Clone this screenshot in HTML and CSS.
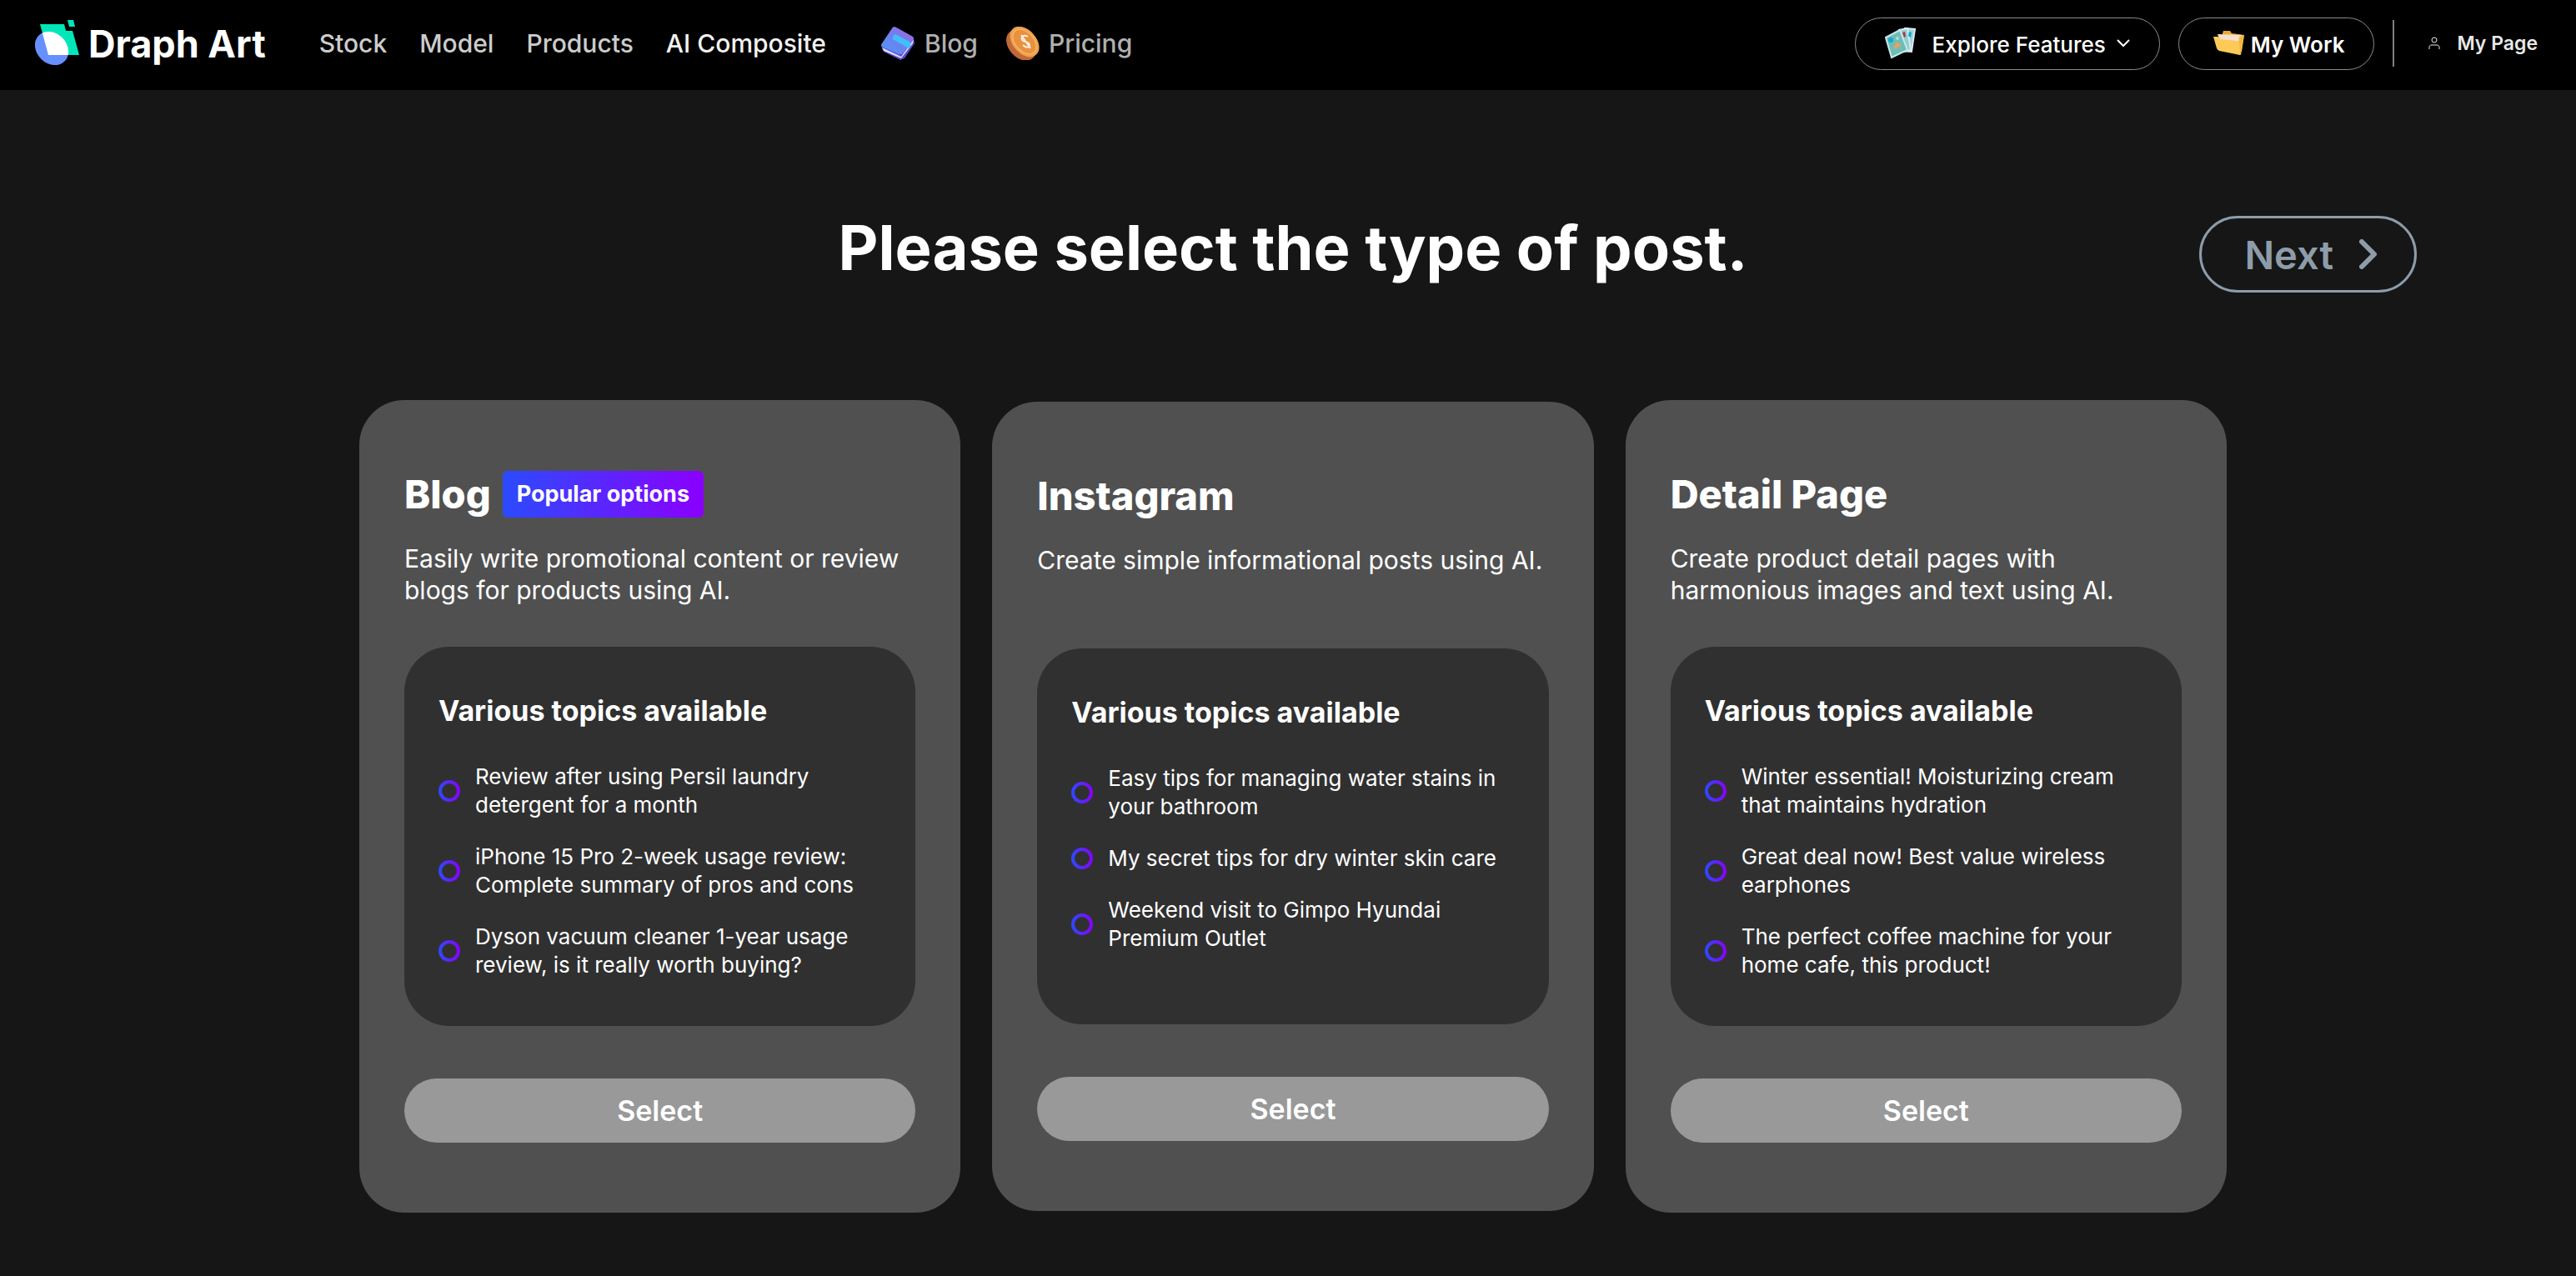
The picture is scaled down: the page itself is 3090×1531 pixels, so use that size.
FILE: index.html
```html
<!-- post type page -->

<!DOCTYPE html>
<html lang="en">

<head>

    <!-- meta datas -->

    <meta charset="UTF-8">
    <meta name="viewport" content="width=device-width, initial-scale=1.0">
    <title>Draph Art</title>

    <!-- css part -->

    <link rel="stylesheet" href="styles.css">
</head>

<body>

    <!-- top bar -->

    <header>
        <a class="logo" href="#">
            <svg width="54" height="56" viewBox="0 0 54 56">
                <clipPath id="sheet">
                    <path d="M6 5H35L37 13H45L53 42H16Z" />
                </clipPath>
                <path d="M6 5H35L37 13H45L53 42H16Z" fill="#00e8b8" />
                <path d="M39 0H46L48 8H41Z" fill="#00e8b8" />
                <ellipse cx="20" cy="34" rx="22" ry="18" fill="#6690ff" transform="rotate(45 20 34)" />
                <g clip-path="url(#sheet)">
                    <ellipse cx="20" cy="34" rx="22" ry="18" fill="#fff" transform="rotate(45 20 34)" />
                </g>
            </svg>
            <span>Draph Art</span>
        </a>

        <nav>
            <a href="#">Stock</a>
            <a href="#">Model</a>
            <a href="#">Products</a>
            <a class="active" href="#">AI Composite</a>
        </nav>

        <div class="links">
            <a href="#">
                <svg width="42" height="40" viewBox="0 0 42 40">
                    <linearGradient id="book" x1="0" y1="1" x2="1" y2="0">
                        <stop offset="0" stop-color="#4a9cf5" />
                        <stop offset="0.5" stop-color="#6f7ff0" />
                        <stop offset="1" stop-color="#a765dc" />
                    </linearGradient>
                    <path d="M1 23L4 30L24 40L29 38L41 20L40 14L26 32Z" fill="#5a49c8" />
                    <path d="M2 25L25 36L40 15L39 20L25 38L4 29Z" fill="#dcdcff" />
                    <path d="M17 0Q18 0 39 12Q41 14 39 16L27 32Q25 34 22 33L2 24Q0 22 2 20L14 2Q15 0 17 0Z" fill="url(#book)" />
                    <path d="M18 9L35 18Q37 20 36 24L34 26L15 15Q14 11 18 9Z" fill="#3fc0fb" />
                </svg>
                <span>Blog</span>
            </a>
            <a href="#">
                <svg width="40" height="40" viewBox="0 0 40 40">
                    <ellipse cx="18" cy="22" rx="15" ry="21" fill="#c06a38" transform="rotate(-42 18 22)" />
                    <ellipse cx="22" cy="18" rx="14" ry="21" fill="#f0a24e" transform="rotate(-42 22 18)" />
                    <ellipse cx="22" cy="18" rx="11" ry="17" fill="#e8913e" stroke="#f9bd74" transform="rotate(-42 22 18)" />
                    <path d="M26 12C21 9 16 13 20 17C23 19 28 18 28 22C28 25 24 26 20 22M18 10L29 26" fill="none" stroke="#fdeedd" stroke-width="2" />
                </svg>
                <span>Pricing</span>
            </a>
        </div>

        <div class="actions">
            <button class="pill explore">
                <svg width="38" height="38" viewBox="0 0 38 38">
                    <path d="M24 1L36 2L32 29L20 28Z" fill="#9ad3d6" stroke="#dbe9f2" stroke-width="2" />
                    <path d="M17 3L27 1L31 27L23 29Z" fill="#8fcfcd" stroke="#dbe9f2" stroke-width="2" />
                    <path d="M21 6L24 5L25 11L23 12Z" fill="#b5304f" />
                    <path d="M29 5L32 6L31 12L28 10Z" fill="#11a9ca" />
                    <path d="M1 12L18 3L27 27L8 36Z" fill="#6dbdb6" stroke="#c9e6e8" stroke-width="2" />
                    <circle cx="7" cy="15" r="3" fill="#11a9ca" />
                    <circle cx="15" cy="13" r="2" fill="#b4d8dc" />
                    <path d="M10 26L14 17L20 22Z" fill="#eda15c" />
                </svg>
                <span>Explore Features</span>
                <svg class="arrow" width="16" height="10" viewBox="0 0 16 10">
                    <path d="M1 1L8 8L15 1" fill="none" stroke="#fff" stroke-width="2" />
                </svg>
            </button>
            <button class="pill work">
                <svg width="38" height="30" viewBox="0 0 38 30">
                    <path d="M11 3L12 0H20L22 3L37 5L34 25L10 22Z" fill="#e9a92e" />
                    <path d="M5 4L34 5L33 27L12 22Z" fill="#f5dfd0" />
                    <path d="M31 7L37 5L33 29L29 28Z" fill="#f2b743" />
                    <path d="M0 7H6L8 10L29 12Q31 12 31 14L32 29L7 24Q5 23 4 21Z" fill="#fdca58" />
                </svg>
                <span>My Work</span>
            </button>
            <span class="line"></span>
            <a class="mypage" href="#">
                <svg width="14" height="16" viewBox="0 0 14 16">
                    <circle cx="7" cy="4" r="3" fill="none" stroke="#e8e8e8" />
                    <path d="M1 15V13C1 11 2 10 4 10H10C12 10 13 11 13 13V15" fill="none" stroke="#e8e8e8" />
                </svg>
                <span>My Page</span>
            </a>
        </div>
    </header>

    <!-- post types -->

    <main>
        <div class="top">
            <h1>Please select the type of post.</h1>
            <button class="next">
                Next
                <svg width="22" height="36" viewBox="0 0 22 36">
                    <path d="M3 3L18 18L3 33" fill="none" stroke="#8e9caa" stroke-width="6" stroke-linecap="round" stroke-linejoin="round" />
                </svg>
            </button>
        </div>

        <div class="cards">
            <section class="card">
                <div class="name">
                    <h2>Blog</h2>
                    <span class="badge">Popular options</span>
                </div>
                <p>Easily write promotional content or review blogs for products using AI.</p>
                <div class="topics">
                    <h3>Various topics available</h3>
                    <ul>
                        <li>Review after using Persil laundry detergent for a month</li>
                        <li>iPhone 15 Pro 2-week usage review: Complete summary of pros and cons</li>
                        <li>Dyson vacuum cleaner 1-year usage review, is it really worth buying?</li>
                    </ul>
                </div>
                <button class="select">Select</button>
            </section>

            <section class="card">
                <div class="name">
                    <h2>Instagram</h2>
                </div>
                <p>Create simple informational posts using AI.</p>
                <div class="topics">
                    <h3>Various topics available</h3>
                    <ul>
                        <li>Easy tips for managing water stains in your bathroom</li>
                        <li>My secret tips for dry winter skin care</li>
                        <li>Weekend visit to Gimpo Hyundai Premium Outlet</li>
                    </ul>
                </div>
                <button class="select">Select</button>
            </section>

            <section class="card">
                <div class="name">
                    <h2>Detail Page</h2>
                </div>
                <p>Create product detail pages with harmonious images and text using AI.</p>
                <div class="topics">
                    <h3>Various topics available</h3>
                    <ul>
                        <li>Winter essential! Moisturizing cream that maintains hydration</li>
                        <li>Great deal now! Best value wireless earphones</li>
                        <li>The perfect coffee machine for your home cafe, this product!</li>
                    </ul>
                </div>
                <button class="select">Select</button>
            </section>
        </div>
    </main>
</body>

</html>
```
FILE: styles.css
```css
*,
*::before {
    margin: 0;
    padding: 0;
    box-sizing: border-box;
}

body {
    min-height: 100vh;
    background-color: #161616;
    color: white;
    font-family: Inter, "Liberation Sans", sans-serif;
}

a {
    color: inherit;
    text-decoration: none;
}

button {
    font-family: inherit;
    color: inherit;
    cursor: pointer;
}

svg {
    flex-shrink: 0;
}

/* top bar */

header {
    display: flex;
    align-items: center;
    height: 108px;
    padding: 0 46px 4px 42px;
    background-color: black;
    white-space: nowrap;
}

header .logo {
    display: flex;
    align-items: center;
    gap: 10px;
    font-size: 45px;
    font-weight: 700;
}

header nav {
    display: flex;
    gap: 39px;
    margin-left: 64px;
    font-size: 30px;
    font-weight: 500;
    color: #cccccc;
}

header nav .active {
    color: #f2f2f2;
}

header .links {
    display: flex;
    gap: 34px;
    margin-left: 65px;
    font-size: 30px;
    font-weight: 500;
    color: #b0b0b0;
}

header .links a {
    display: flex;
    align-items: center;
    gap: 11px;
}

header .actions {
    display: flex;
    align-items: center;
    margin-left: auto;
}

header .pill {
    display: flex;
    align-items: center;
    justify-content: center;
    height: 63px;
    border: 1px solid #8c8c8c;
    border-radius: 32px;
    background-color: black;
    font-size: 26px;
    font-weight: 500;
}

header .pill span {
    padding-top: 3px;
}

header .explore {
    padding: 0 35px;
    gap: 19px;
}

header .explore .arrow {
    margin-left: -6px;
}

header .work {
    margin-left: 22px;
    padding: 0 35px 0 41px;
    gap: 7px;
    font-weight: 600;
}

header .line {
    width: 2px;
    height: 56px;
    margin-left: 22px;
    background-color: #808080;
}

header .mypage {
    display: flex;
    align-items: center;
    gap: 20px;
    margin-left: 41px;
    font-size: 23px;
    font-weight: 600;
    color: #e8e8e8;
}

/* title and next */

main {
    padding: 151px 191px 76px 203px;
}

main .top {
    display: grid;
    grid-template-columns: 1fr auto 1fr;
    align-items: start;
}

main .top h1 {
    grid-column: 2;
    font-size: 74px;
    line-height: 76px;
    font-weight: 700;
}

main .top .next {
    display: flex;
    align-items: center;
    justify-self: end;
    gap: 31px;
    height: 92px;
    padding: 0 44px 0 51px;
    border: 3px solid #8e9caa;
    border-radius: 46px;
    background-color: transparent;
    font-size: 47px;
    font-weight: 600;
    color: #8e9caa;
}

/* cards */

main .cards {
    display: grid;
    grid-template-columns: repeat(3, 1fr);
    align-items: center;
    gap: 38px;
    max-width: 2240px;
    margin: 129px auto 0;
}

.card {
    padding: 84px 54px;
    border-radius: 54px;
    background-color: #505050;
}

.card .name {
    display: flex;
    align-items: center;
    gap: 14px;
}

.card h2 {
    font-size: 47px;
    line-height: 58px;
    font-weight: 800;
}

.card .badge {
    padding: 0 17px;
    border-radius: 6px;
    background: linear-gradient(to right, #2b4bff, #8b00ff);
    font-size: 27px;
    line-height: 56px;
    font-weight: 700;
}

.card p {
    min-height: 76px;
    margin-top: 29px;
    font-size: 30px;
    line-height: 38px;
}

.card .topics {
    min-height: 451px;
    margin-top: 49px;
    padding: 56px 41px;
    border-radius: 54px;
    background-color: #303030;
}

.card h3 {
    font-size: 34px;
    line-height: 41px;
    font-weight: 700;
}

.card ul {
    display: flex;
    flex-direction: column;
    gap: 28px;
    margin-top: 42px;
    list-style: none;
}

.card li {
    display: flex;
    align-items: center;
    gap: 18px;
    font-size: 26px;
    line-height: 34px;
}

/* gradient ring */

.card li::before {
    content: "";
    flex-shrink: 0;
    width: 26px;
    height: 26px;
    border: 4px solid transparent;
    border-radius: 50%;
    background: linear-gradient(#303030, #303030) padding-box, linear-gradient(to right, #2b4bff, #8b00ff) border-box;
}

.card .select {
    display: block;
    width: 100%;
    height: 77px;
    margin-top: 63px;
    border: none;
    border-radius: 39px;
    background-color: #999999;
    font-size: 34px;
    font-weight: 600;
}
```
